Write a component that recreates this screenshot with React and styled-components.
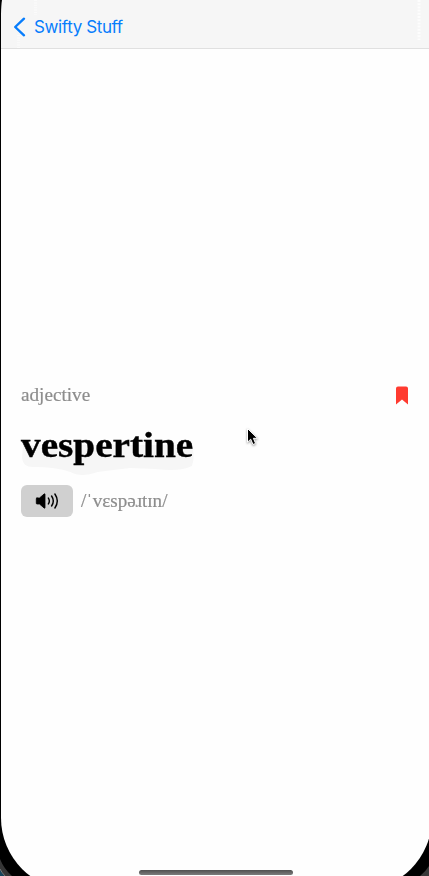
import React from 'react';
import styled, { createGlobalStyle } from 'styled-components';

const GlobalStyle = createGlobalStyle`
  * { box-sizing: border-box; }
  body { margin: 0; background: #000; overflow: hidden; }
`;

const Device = styled.div`
  position: relative;
  width: 429px;
  height: 876px;
  overflow: hidden;
  background: #000;
`;

const Screen = styled.main`
  display: flex;
  flex-direction: column;
  width: 431px;
  height: 890px;
  margin-left: 1px;
  background: #fefefe;
  border-radius: 0 0 72px 72px;
  overflow: hidden;
`;

const NavBar = styled.header`
  height: 49px;
  flex: none;
  padding: 5px 0 0 12px;
  display: flex;
  align-items: center;
  background: #f6f6f6;
  border-bottom: 1px solid #e0e0e0;
`;

const BackButton = styled.button`
  display: flex;
  align-items: center;
  gap: 8px;
  padding: 0;
  border: 0;
  background: none;
  color: #077dfc;
  font: 400 17px/22px Inter, sans-serif;
  letter-spacing: -0.38px;
  svg { display: block; }
`;

const Entry = styled.section`
  padding: 333px 24px 0 20px;
  flex: 1;
  display: flex;
  flex-direction: column;
`;

const Row = styled.div`
  display: flex;
  align-items: center;
  justify-content: ${(p) => (p.$spread ? 'space-between' : 'flex-start')};
  height: ${(p) => p.$height}px;
`;

const SerifText = styled.span`
  display: block;
  font: 400 18px/24px "Liberation Serif", serif;
  color: #8d8d8d;
  -webkit-text-stroke: 0.2px #8d8d8d;
  white-space: nowrap;
  transform: scaleX(${(p) => p.$stretch});
  transform-origin: left center;
`;

const Word = styled.h1`
  margin: 16px 0 17px;
  font: 700 35px/44px "Liberation Serif", serif;
  color: #000;
  -webkit-text-stroke: 0.4px #000;
  transform: scaleX(1.122);
  transform-origin: left center;
  width: max-content;
  position: relative;
  z-index: 0;
`;

const WordShade = styled.svg`
  position: absolute;
  z-index: -1;
  left: 0;
  top: 20px;
  width: 154px;
  height: 32px;
`;

const SpeakButton = styled.button`
  display: flex;
  align-items: center;
  justify-content: center;
  width: 52px;
  height: 32px;
  margin-right: 8px;
  padding: 0;
  border: 0;
  border-radius: 6px;
  background: #d0d0d0;
`;

const Overlay = styled.svg`
  position: absolute;
  left: ${(p) => p.$x}px;
  top: ${(p) => p.$y}px;
  pointer-events: none;
`;

const HomeIndicator = styled.div`
  position: absolute;
  left: 139px;
  top: 870px;
  width: 154px;
  height: 5px;
  border-radius: 3px;
  background: linear-gradient(#505050, #7c7c7c);
`;

export default function App() {
  return (
    <Device>
      <GlobalStyle />
      <Screen>
        <NavBar>
          <BackButton>
            <svg width="13" height="20" viewBox="0 0 13 20" fill="none" stroke="currentColor" strokeWidth="2.4" strokeLinecap="round" strokeLinejoin="round">
              <path d="M11 1.7 2.2 10 11 18.3" />
            </svg>
            Swifty Stuff
          </BackButton>
        </NavBar>
        <Entry>
          <Row $height={26} $spread>
            <SerifText $stretch={1.065}>adjective</SerifText>
            <svg width="12" height="19" viewBox="0 0 12 19">
              <path d="M0 2.5Q0 .5 2 .5H10Q12 .5 12 2.5V18.4L6 13.4 0 18.4Z" fill="#ff3b30" />
            </svg>
          </Row>
          <Word>
            <WordShade viewBox="0 0 171 32" preserveAspectRatio="none">
              <path d="M2 1H169Q173 12 169 22Q158 28 133 25L108 24Q91 26 76 28Q59 34 49 28Q34 23 14 23Q2 24 1 14Z" fill="#f6f6f6" />
            </WordShade>
            vespertine
          </Word>
          <Row $height={32}>
            <SpeakButton aria-label="Play pronunciation">
              <svg width="24" height="18" viewBox="0 0 24 18" fill="none" stroke="#000" strokeWidth="1.45" strokeLinecap="round">
                <path d="M2 6H4.5L9 2.1Q10 1.3 10 2.5V15.5Q10 16.7 9 15.9L4.5 12H2Q1.3 12 1.3 11.2V6.8Q1.3 6 2 6Z" fill="#000" stroke="#000" strokeWidth=".8" />
                <path d="M13.4 6.1Q15.3 9 13.4 11.9M16.6 4Q20 9 16.6 14M19.9 2Q24.7 9 19.9 16" />
              </svg>
            </SpeakButton>
            <SerifText $stretch={1.06}>/ˈvɛspəɹtɪn/</SerifText>
          </Row>
        </Entry>
      </Screen>
      <Overlay $x={0} $y={0} width="429" height="48" fill="none" stroke="#fff" strokeWidth="3">
        <path d="M35.5 0V15M18.5 35V48" strokeDasharray="1 1.4" opacity=".6" />
        <path d="M419 0V40" strokeDasharray="2 1.2" opacity=".8" />
        <path d="M0 0H2Q1.2 5 1 14H0Z" fill="#000" stroke="none" />
      </Overlay>
      <Overlay $x={0} $y={856} width="14" height="20">
        <path d="M0 3Q4 13 12 20H0Z" fill="#363636" />
        <path d="M0 13Q2 17 5 20H0Z" fill="#16445a" />
        <path d="M0 13Q2 17 5 20" fill="none" stroke="#777" />
      </Overlay>
      <Overlay $x={419} $y={862} width="10" height="14">
        <path d="M10 4 10 14H1Q7 9 10 4Z" fill="#393939" />
      </Overlay>
      <HomeIndicator />
      <Overlay $x={244} $y={426} width="17" height="22" viewBox="0 0 17 22">
        <path d="M3.5 2.5V16.2L6.7 13.2 9 18.5 11.6 17.4 9.4 12.3H13.5Z" fill="#000" stroke="#fff" strokeWidth="1" filter="drop-shadow(0 1px 1px #0006)" />
      </Overlay>
    </Device>
  );
}
